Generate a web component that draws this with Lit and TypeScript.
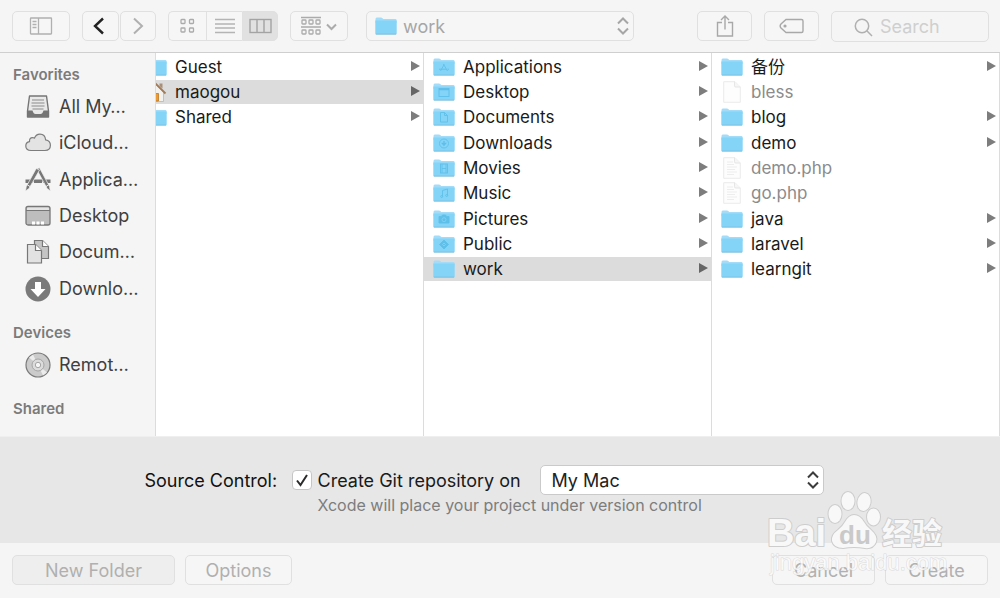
import { LitElement, html, svg, css, nothing } from "lit";
import { customElement } from "lit/decorators.js";
import { classMap } from "lit/directives/class-map.js";

type Entry = { name: string; kind: string; selected?: boolean };

const glyphs: Record<string, unknown> = {
  applications: svg`<path d="M7.500 14 11.200 7.500M14.500 14 10.400 7M6 12.200h7M14.500 12.200H16" />`,
  desktop: svg`<rect x="6" y="6.500" width="10" height="8" /><path d="M6 7.500h10" stroke-width="1.500" />`,
  documents: svg`<path d="M7.500 5.500h4l3 3v6.500h-7zM11.500 5.500v3h3" />`,
  downloads: svg`<circle cx="11" cy="10.500" r="4.500" /><path d="M11 8v3M9.500 10.500l1.500 1.700 1.500-1.700z" stroke-width="1.300" />`,
  movies: svg`<rect x="7.500" y="6" width="7" height="9" /><path d="M9 6v9M13 6v9M9 10.500h4" />`,
  music: svg`<path d="M9.500 13.500V7.500l5-1.500v6.500" /><circle cx="8.700" cy="13.500" r="1" /><circle cx="13.700" cy="12.500" r="1" />`,
  pictures: svg`<path d="M6 7.500h2.500l1-1.500h3l1 1.500H16V14H6z" fill="#5fbfe8" /><circle cx="11" cy="10.700" r="2" stroke="#7fd0f3" />`,
  public: svg`<path d="m11 6 4.500 4.500L11 15l-4.500-4.500z" fill="#5fbfe8" /><path d="m11 9 1.500 1.500L11 12l-1.500-1.500z" stroke="#7fd0f3" />`,
};

function folderIcon(kind = "folder") {
  return html`<svg class="icon" viewBox="0 0 22 20" aria-hidden="true">
    <path d="M.5 3.200Q.5 1.500 1.700 1.500H6q.8 0 1.300.6l.9.900H20.500q1 0 1 1V7H.5z" fill="#a3dcf8" />
    <path d="M.3 4.500H21.700V17.300q0 .9-.9.900H1.200q-.9 0-.9-.9z" fill="#84d4f8" />
    <path d="M.8 18.200H21.200" stroke="#74b8d6" stroke-width=".8" />
    <g fill="none" stroke="#5fbfe8" stroke-width=".9">${glyphs[kind] ?? nothing}</g>
  </svg>`;
}

function fileIcon(lined: boolean) {
  return html`<svg class="icon" viewBox="0 0 22 22" aria-hidden="true">
    <path d="M2.700.700h11.300l5.300 5.300v15.300H2.700z" fill="#fdfdfd" stroke="#ebebeb" />
    <path d="M13.500.800v4q0 1.200 1.200 1.200h4.500" fill="#f6f6f6" stroke="#e6e6e6" />
    ${lined
      ? svg`<path d="M6 5h6M6 7.500h7M6 10h10M6 12.500h8M6 15h10M6 17.500h7" stroke="#ededed" />`
      : nothing}
  </svg>`;
}

function homeIcon() {
  return html`<svg class="icon" viewBox="0 0 22 22" aria-hidden="true">
    <path d="M4 11 11 4l7.500 7V20.500H4z" fill="#f3f1ee" stroke="#b9b5b0" stroke-width=".8" />
    <path d="M9.500 12.500h4v7.500h-4z" fill="#ee9a2f" stroke="#b06f20" stroke-width=".7" />
    <path d="M1 12 11 3l9.500 9.500" fill="none" stroke="#a27b56" stroke-width="1.800" />
    <path d="M14.500 2.500h3v5l-3-2.500z" fill="#a98f78" />
  </svg>`;
}

function entryIcon(kind: string) {
  if (kind === "home") return homeIcon();
  if (kind === "file") return fileIcon(false);
  if (kind === "php") return fileIcon(true);
  return folderIcon(kind);
}

const sidebarIcons: Record<string, unknown> = {
  all: svg`<path d="M4.500 2h17L23.500 17v6h-21V17z" fill="#e9e9e9" stroke="#757575" stroke-width="1.400" stroke-linejoin="round" />
    <path d="M7 6h12M6.500 9h13M6.500 12h13M7.500 15h11" stroke="#8b8b8b" stroke-width="1.200" />
    <path d="M2.500 16.500h5q1 3.500 3 3.500h5q2 0 3-3.500h5v6.500h-21z" fill="#757575" />`,
  cloud: svg`<path d="M6 20.500q-5.200-.3-5.200-4.600 0-3.800 3.700-4.300-.2-4 3-4 1.200 0 2 .5Q11 4.200 15 4.200q5 0 5.600 5.600 4.800.8 4.800 5.400 0 5.100-5.400 5.300z" fill="#e3e3e3" stroke="#7d7d7d" stroke-width="1.200" />`,
  apps: svg`<path d="M.5 12.500h25v3.500h-25z" fill="#777" /><path d="m13 4.500-5.500 12h11z" fill="#f5f5f5" /><path d="M9 12.500h8V16H9z" fill="#777" />
    <path d="M14.500.800 24.500 19.500l.8 4.500-3.200-2.500L11.500 2z" fill="#777" stroke="#f5f5f5" stroke-width=".7" />
    <path d="m11.200 1.500 3.300 1.500L4 21.500.600 24l.6-4.200z" fill="#777" stroke="#f5f5f5" stroke-width=".7" />
    <path d="m2.500 18 3 1.800M20.500 19.800l3-1.800" stroke="#f5f5f5" />`,
  desktop: svg`<rect x="1" y="3.500" width="24" height="18.500" rx="2" fill="#bdbdbd" stroke="#777" stroke-width="1.300" />
    <path d="M2 5.500q0-1 1-1h20q1 0 1 1V7H2z" fill="#e4e4e4" /><path d="M1 7.500h24" stroke="#777" />
    <path d="M7 18.500h3v3H7zM11.500 18.500h3v3h-3zM16 18.500h3v3h-3z" fill="#fff" />`,
  documents: svg`<path d="M9.500 1.500h8l6 6v12h-14z" fill="#c4c4c4" stroke="#777" stroke-width="1.200" /><path d="M17.500 1.500v6h6" fill="#fff" stroke="#777" stroke-width="1.200" />
    <path d="M2.500 5.500h8l6 6v12.500h-14z" fill="#e2e2e2" stroke="#777" stroke-width="1.200" /><path d="M10.500 5.500v6h6" fill="#fff" stroke="#777" stroke-width="1.200" />`,
  downloads: svg`<circle cx="13" cy="13" r="12.500" fill="#7a7a7a" /><path d="M10 6h6v7h4.500L13 21l-7.500-8H10z" fill="#fff" />`,
  disc: svg`<circle cx="13" cy="13" r="12" fill="#cbcbcb" stroke="#7a7a7a" stroke-width="1.200" />
    <path d="M13 13 4 5.500 8 2.500zM13 13l9 7.500-4 3z" fill="#ececec" />
    <circle cx="13" cy="13" r="6" fill="#dcdcdc" stroke="#a5a5a5" /><circle cx="13" cy="13" r="2.700" fill="#f5f5f5" stroke="#a5a5a5" />`,
};

const favorites = [
  ["all", "All My…"],
  ["cloud", "iCloud…"],
  ["apps", "Applica…"],
  ["desktop", "Desktop"],
  ["documents", "Docum…"],
  ["downloads", "Downlo…"],
];

const columns: Entry[][] = [
  [
    { name: "Guest", kind: "folder" },
    { name: "maogou", kind: "home", selected: true },
    { name: "Shared", kind: "folder" },
  ],
  [
    { name: "Applications", kind: "applications" },
    { name: "Desktop", kind: "desktop" },
    { name: "Documents", kind: "documents" },
    { name: "Downloads", kind: "downloads" },
    { name: "Movies", kind: "movies" },
    { name: "Music", kind: "music" },
    { name: "Pictures", kind: "pictures" },
    { name: "Public", kind: "public" },
    { name: "work", kind: "folder", selected: true },
  ],
  [
    { name: "备份", kind: "folder" },
    { name: "bless", kind: "file" },
    { name: "blog", kind: "folder" },
    { name: "demo", kind: "folder" },
    { name: "demo.php", kind: "php" },
    { name: "go.php", kind: "php" },
    { name: "java", kind: "folder" },
    { name: "laravel", kind: "folder" },
    { name: "learngit", kind: "folder" },
  ],
];

@customElement("app-root")
export class AppRoot extends LitElement {
  static styles = css`
    :host {
      display: flex;
      flex-direction: column;
      position: relative;
      min-height: 100vh;
      box-sizing: border-box;
      overflow: hidden;
      background: #f5f5f5;
      color: #1a1a1a;
      font-family: Inter, "Noto Sans CJK SC", sans-serif;
      font-size: 17px;
      line-height: 24px;
    }
    * { box-sizing: border-box; }
    button, select, input {
      font: inherit;
      color: inherit;
      margin: 0;
    }
    svg { display: block; flex: none; }
    .toolbar {
      display: flex;
      align-items: center;
      height: 53px;
      padding: 0 11px 0 12px;
      border-bottom: 1px solid #cfcfcf;
    }
    .btn {
      display: flex;
      align-items: center;
      justify-content: center;
      height: 30px;
      padding: 0;
      border: 1px solid #e0e0e0;
      border-radius: 5px;
      background: #f6f6f6;
      color: #b0b0b0;
      font-size: 18px;
    }
    .tool { width: 58px; }
    .nav { display: flex; gap: 1px; margin: 0 12px; }
    .nav .btn { width: 36px; }
    .nav .back { width: 37px; padding-right: 4px; color: #222; }
    .views { display: flex; margin-right: 12px; }
    .views .btn { width: 36px; border-radius: 0; border-right-width: 0; }
    .views .btn:first-child { width: 38px; border-radius: 5px 0 0 5px; }
    .views .btn:last-child {
      border-right-width: 1px;
      border-radius: 0 5px 5px 0;
      background: #e1e1e1;
    }
    .select {
      display: grid;
      align-items: center;
      height: 30px;
    }
    .select > * { grid-area: 1 / 1; }
    .select select {
      appearance: none;
      width: 100%;
      height: 100%;
      border: 1px solid #e0e0e0;
      border-radius: 5px;
      background: #f6f6f6;
      padding: 2px 32px 0 11px;
      opacity: 1;
    }
    .select svg { pointer-events: none; }
    .chevrons { justify-self: end; margin-right: 5px; }
    .path { width: 268px; margin: 0 auto 0 18px; color: #a6a6a6; font-size: 18px; }
    .path select { padding-left: 36px; }
    .path .icon { margin-left: 9px; }
    .small { width: 55px; margin-right: 12px; }
    .search {
      display: flex;
      align-items: center;
      gap: 7px;
      width: 158px;
      height: 31px;
      padding: 2px 8px 0 22px;
      border: 1px solid #e0e0e0;
      border-radius: 5px;
      color: #b0b0b0;
    }
    .search input {
      flex: 1;
      min-width: 0;
      border: 0;
      padding: 0;
      outline: 0;
      background: none;
      font-size: 18px;
    }
    .search input::placeholder { color: #cfcfcf; opacity: 1; }
    .browser {
      display: grid;
      flex: 1;
      grid-template-columns: 156px 268fr 288fr 288fr;
      background: #fff;
    }
    .sidebar {
      display: flex;
      flex-direction: column;
      gap: 12px;
      padding-top: 8px;
      background: #f5f5f5;
      border-right: 1px solid #dcdcdc;
    }
    .heading {
      margin: 0;
      padding-left: 13px;
      color: #7b7b7b;
      font-size: 15px;
      line-height: 28px;
      font-weight: 600;
    }
    .places {
      display: grid;
      grid-auto-rows: 1fr;
      margin: 0;
      padding: 0;
      list-style: none;
    }
    .favorites { height: 218px; }
    .devices { height: 36px; }
    .place {
      display: flex;
      align-items: center;
      gap: 8px;
      padding-left: 25px;
      color: #404040;
      font-size: 18px;
      white-space: nowrap;
    }
    .column {
      overflow: hidden;
      padding-top: 1px;
      border-right: 1px solid #dcdcdc;
    }
    .entries {
      display: grid;
      grid-template-rows: repeat(9, 1fr);
      align-items: center;
      height: 228px;
      margin: 0;
      padding: 0;
      list-style: none;
    }
    .scrolled .entries { margin-left: -20px; }
    .entry {
      display: flex;
      align-items: center;
      gap: 8px;
      height: 24px;
      padding: 0 3px 0 9px;
    }
    .entry .icon, .path .icon { width: 22px; }
    .entry .name { flex: 1; }
    .selected { background: #dcdcdc; }
    .dim .name { color: #8b8b8b; }
    .options {
      display: flex;
      justify-content: center;
      gap: 15px;
      height: 107px;
      padding: 28px 32px 0 0;
      background: #e7e7e7;
      border-top: 1px solid #efefef;
    }
    .label { width: 132px; color: #111; font-size: 18px; line-height: 32px; white-space: nowrap; text-align: right; }
    .settings { display: grid; align-content: start; }
    .line { display: flex; height: 30px; }
    .check {
      display: grid;
      align-self: center;
      width: 20px;
      height: 20px;
      margin-right: 6px;
    }
    .check > * { grid-area: 1 / 1; }
    .check input {
      appearance: none;
      width: 20px;
      height: 20px;
      border: 1px solid #c6c6c6;
      border-radius: 4px;
      background: #fff;
    }
    .check svg { pointer-events: none; z-index: 1; }
    .git { width: 222px; font-size: 18px; white-space: nowrap; line-height: 32px; }
    .host { width: 284px; }
    .host select {
      background: #fff;
      border-color: #cacaca;
      color: #222;
      font-size: 18px;
    }
    .hint {
      margin: 0;
      padding-left: 26px;
      color: #7d7d7d;
      font-size: 16px;
      line-height: 20px;
    }
    .footer {
      display: flex;
      gap: 10px;
      padding: 12px 12px 13px;
    }
    .footer .btn { padding-top: 2px; }
    .wide { width: 163px; background: #eee; }
    .mid { width: 107px; margin-right: auto; }
    .end { width: 103px; }
    .watermark {
      position: absolute;
      right: 48px;
      bottom: 18px;
      pointer-events: none;
    }
    .mark { font-family: "Liberation Sans", "Noto Sans CJK SC", sans-serif; }
  `;

  private chevrons(color: string) {
    return html`<svg class="chevrons" width="12" height="20" viewBox="0 0 12 20" fill="none" stroke=${color} stroke-width="2" aria-hidden="true">
      <path d="m1 7.500 5-5 5 5M1 12.500l5 5 5-5" />
    </svg>`;
  }

  private entry(e: Entry) {
    const isFile = e.kind === "file" || e.kind === "php";
    return html`<li class=${classMap({ entry: true, selected: !!e.selected, dim: isFile })}>
      ${entryIcon(e.kind)}
      <span class="name">${e.name}</span>
      ${isFile
        ? nothing
        : html`<svg width="9" height="12" viewBox="0 0 9 12" aria-hidden="true"><path d="M0 0 9 5 0 10z" fill=${e.selected ? "#666" : "#7d7d7d"} /></svg>`}
    </li>`;
  }

  private place([icon, name]: string[]) {
    return html`<li class="place">
      <svg width="26" height="26" viewBox="0 0 26 26" fill="none" aria-hidden="true">${sidebarIcons[icon]}</svg>
      <span>${name}</span>
    </li>`;
  }

  render() {
    return html`
      <header class="toolbar">
        <button class="btn tool" aria-label="Toggle sidebar">
          <svg width="24" height="18" viewBox="0 0 24 18" fill="none" stroke="#b0b0b0" stroke-width="1.300"><rect x="1.500" y="1" width="21" height="16" rx=".5" /><path d="M9.500 1v16M3.500 4.500h4M3.500 7.500h4M3.500 10.500h4" /></svg>
        </button>
        <div class="nav">
          <button class="btn back" aria-label="Back"><svg width="12" height="18" viewBox="0 0 12 18" fill="none" stroke="currentColor" stroke-width="2.400"><path d="M10 1.500 2 9l8 7.500" /></svg></button>
          <button class="btn" aria-label="Forward"><svg width="12" height="18" viewBox="0 0 12 18" fill="none" stroke="currentColor" stroke-width="2"><path d="M2 1.500 10 9l-8 7.500" /></svg></button>
        </div>
        <div class="views">
          <button class="btn" aria-label="Icon view"><svg width="16" height="16" viewBox="0 0 16 16" fill="none" stroke="#ababab" stroke-width="1.300"><rect x="1" y="1.500" width="4" height="4" rx=".7" /><rect x="9.500" y="1.500" width="4" height="4" rx=".7" /><rect x="1" y="10" width="4" height="4" rx=".7" /><rect x="9.500" y="10" width="4" height="4" rx=".7" /></svg></button>
          <button class="btn" aria-label="List view"><svg width="20" height="16" viewBox="0 0 20 16" stroke="#b4b4b4" stroke-width="1.300"><path d="M0 1.500h20M0 6h20M0 10h20M0 14.500h20" /></svg></button>
          <button class="btn" aria-label="Column view"><svg width="23" height="16" viewBox="0 0 23 16" fill="none" stroke="#a3a3a3" stroke-width="1.400"><rect x="1" y="1.500" width="21" height="13" /><path d="M8 1.500v13M15 1.500v13" /></svg></button>
        </div>
        <button class="btn tool" aria-label="Arrange">
          <svg width="36" height="20" viewBox="0 0 36 20" fill="none" stroke="#ababab" stroke-width="1.300"><path d="M0 1.500h20M0 11h20" /><rect x="1" y="4" width="4" height="4" rx=".7" /><rect x="8" y="4" width="4" height="4" rx=".7" /><rect x="15" y="4" width="4" height="4" rx=".7" /><rect x="1" y="14" width="4" height="4" rx=".7" /><rect x="8" y="14" width="4" height="4" rx=".7" /><rect x="15" y="14" width="4" height="4" rx=".7" /><path d="m26 8.500 4.500 4.500L35 8.500" stroke-width="2" /></svg>
        </button>
        <div class="select path">
          <select aria-label="Current folder"><option>work</option></select>
          ${folderIcon()}${this.chevrons("#a6a6a6")}
        </div>
        <button class="btn small" aria-label="Share">
          <svg width="18" height="24" viewBox="0 0 18 24" fill="none" stroke="#a8a8a8" stroke-width="1.400"><path d="M6 8.500H1.500V22h15V8.500H12M9 15.500V2M5 6l4-4 4 4" /></svg>
        </button>
        <button class="btn small" aria-label="Edit tags">
          <svg width="25" height="16" viewBox="0 0 25 16" fill="none" stroke="#a8a8a8" stroke-width="1.400"><path d="M7 1.500h15.500q1.500 0 1.500 1.500v10q0 1.500-1.500 1.500H7L2 10Q.3 8 2 6z" /><circle cx="6" cy="8" r=".9" fill="#a8a8a8" /></svg>
        </button>
        <label class="search">
          <svg width="19" height="19" viewBox="0 0 19 19" fill="none" stroke="#b0b0b0" stroke-width="1.500"><circle cx="8" cy="8" r="6.700" /><path d="m12.800 12.800 5.200 5.200" /></svg>
          <input type="text" placeholder="Search" aria-label="Search" />
        </label>
      </header>

      <main class="browser">
        <nav class="sidebar">
          <section><h2 class="heading">Favorites</h2><ul class="places favorites">${favorites.map((p) => this.place(p))}</ul></section>
          <section><h2 class="heading">Devices</h2><ul class="places devices">${this.place(["disc", "Remot…"])}</ul></section>
          <section><h2 class="heading">Shared</h2></section>
        </nav>
        ${columns.map((c, i) => html`<div class=${classMap({ column: true, scrolled: i === 0 })}><ul class="entries">${c.map((e) => this.entry(e))}</ul></div>`)}
      </main>

      <section class="options">
        <span class="label">Source Control:</span>
        <div class="settings">
          <div class="line">
            <span class="check">
              <input id="git" type="checkbox" checked />
              <svg width="20" height="20" viewBox="0 0 20 20" fill="none" stroke="#2a2a2a" stroke-width="2" aria-hidden="true"><path d="m5 10.500 3.500 4.500L15 5" /></svg>
            </span>
            <label class="git" for="git">Create Git repository on</label>
            <div class="select host">
              <select aria-label="Repository location"><option>My Mac</option></select>
              ${this.chevrons("#3c3c3c")}
            </div>
          </div>
          <p class="hint">Xcode will place your project under version control</p>
        </div>
      </section>

      <footer class="footer">
        <button class="btn wide">New Folder</button>
        <button class="btn mid">Options</button>
        <button class="btn end">Cancel</button>
        <button class="btn end">Create</button>
      </footer>

      <svg class="watermark" width="184" height="90" viewBox="0 0 184 90" aria-hidden="true">
        <g class="mark" fill="#f8f8f8" stroke="#cdcdcd" stroke-width="2" paint-order="stroke" stroke-linejoin="round" font-weight="700">
          <ellipse cx="67" cy="24" rx="6.500" ry="9" /><ellipse cx="80" cy="11" rx="6.500" ry="9" />
          <ellipse cx="96" cy="12" rx="6.500" ry="9" transform="rotate(10 96 12)" /><ellipse cx="105.500" cy="27" rx="6.500" ry="8.500" />
          <path d="M86 25q6 0 10 7 2 4 7 8 7 6 5 12-3 7-11 6-11-2-22 0-9 0-11-7-1-6 6-11 5-4 7-8 4-7 9-7z" />
          <text x="-1" y="56" font-size="38">Bai</text>
          <text x="71" y="54" font-size="26" fill="#c9c9c9" stroke="none">du</text>
          <text x="114" y="54" font-size="30">经验</text>
          <text x="2" y="80" font-size="22" font-weight="400" fill="#fff" fill-opacity=".75" stroke="#c8c8c8" stroke-opacity=".6" stroke-width="1">jingyan.baidu.com</text>
        </g>
      </svg>
    `;
  }
}
